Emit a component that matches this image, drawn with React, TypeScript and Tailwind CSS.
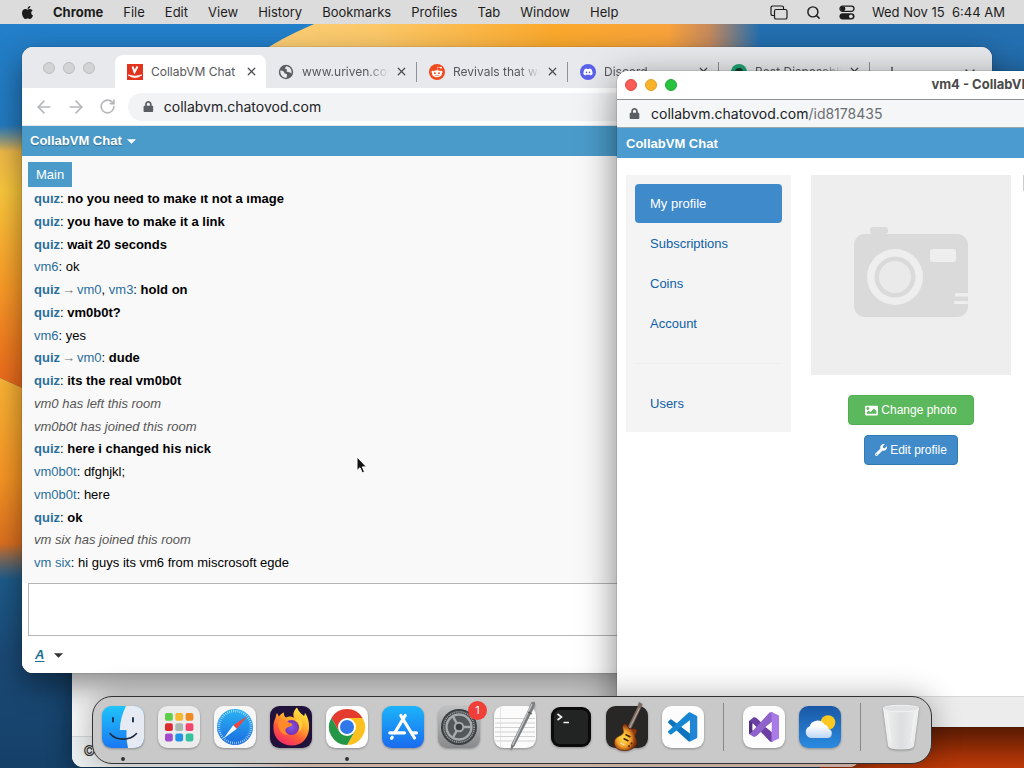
import React from 'react';
import { FaApple, FaDiscord, FaRedditAlien, FaWrench, FaLock, FaImage } from 'react-icons/fa';
import { ArrowLeft, ArrowRight, ChevronDown, Plus, RotateCw, Search, X } from 'lucide-react';
import clsx from 'clsx';

interface Message {
  from?: string;
  to?: string[];
  text: string;
  own?: boolean;
}

const MENUS = ['File', 'Edit', 'View', 'History', 'Bookmarks', 'Profiles', 'Tab', 'Window', 'Help'];

const MESSAGES: Message[] = [
  { from: 'quiz', text: 'no you need to make it not a image', own: true },
  { from: 'quiz', text: 'you have to make it a link', own: true },
  { from: 'quiz', text: 'wait 20 seconds', own: true },
  { from: 'vm6', text: 'ok' },
  { from: 'quiz', to: ['vm0', 'vm3'], text: 'hold on', own: true },
  { from: 'quiz', text: 'vm0b0t?', own: true },
  { from: 'vm6', text: 'yes' },
  { from: 'quiz', to: ['vm0'], text: 'dude', own: true },
  { from: 'quiz', text: 'its the real vm0b0t', own: true },
  { text: 'vm0 has left this room' },
  { text: 'vm0b0t has joined this room' },
  { from: 'quiz', text: 'here i changed his nick', own: true },
  { from: 'vm0b0t', text: 'dfghjkl;' },
  { from: 'vm0b0t', text: 'here' },
  { from: 'quiz', text: 'ok', own: true },
  { text: 'vm six has joined this room' },
  { from: 'vm six', text: 'hi guys its vm6 from miscrosoft egde' },
];

const Wallpaper = () => (
  <svg className="absolute inset-0 h-full w-full" viewBox="0 0 1024 768" preserveAspectRatio="none" aria-hidden="true">
    <defs>
      <linearGradient id="sky" x1="0" y1="0" x2="0" y2="1">
        <stop offset="0" stopColor="#2380cc" />
        <stop offset="0.7" stopColor="#1f6595" />
        <stop offset="0.85" stopColor="#1a4a77" />
        <stop offset="1" stopColor="#154068" />
      </linearGradient>
      <linearGradient id="petalTop" x1="0" y1="0" x2="1" y2="0">
        <stop offset="0" stopColor="#fccf78" />
        <stop offset="0.25" stopColor="#fcc868" />
        <stop offset="0.6" stopColor="#fba92c" />
        <stop offset="0.82" stopColor="#f9a33c" />
        <stop offset="0.9" stopColor="#c88a5c" />
        <stop offset="1" stopColor="#246fb0" />
      </linearGradient>
      <linearGradient id="petalLeft" gradientUnits="userSpaceOnUse" x1="0" y1="125" x2="0" y2="392">
        <stop offset="0" stopColor="#c9a25c" stopOpacity="0" />
        <stop offset="0.1" stopColor="#efb948" />
        <stop offset="0.25" stopColor="#fbc83c" />
        <stop offset="0.6" stopColor="#fb9c28" />
        <stop offset="1" stopColor="#ea651a" />
      </linearGradient>
      <linearGradient id="petalLow" gradientUnits="userSpaceOnUse" x1="0" y1="378" x2="0" y2="580">
        <stop offset="0" stopColor="#fbb535" />
        <stop offset="0.5" stopColor="#f79524" />
        <stop offset="0.82" stopColor="#dd701f" />
        <stop offset="1" stopColor="#a06a4a" stopOpacity="0" />
      </linearGradient>
      <linearGradient id="ember" x1="0" y1="0.7" x2="0" y2="1">
        <stop offset="0" stopColor="#7d2605" />
        <stop offset="1" stopColor="#c03a08" />
      </linearGradient>
    </defs>
    <rect width="1024" height="768" fill="url(#sky)" />
    <path d="M750 0H1024V200H750Z" fill="#246fb0" />
    <path d="M760 0V60H248C290 32 320 20 380 0Z" fill="url(#petalTop)" />
    <path d="M0 125H60V405L0 378Z" fill="url(#petalLeft)" />
    <path d="M0 378L60 405V580H0Z" fill="url(#petalLow)" />
    <rect x="820" y="600" width="204" height="168" fill="url(#ember)" />
  </svg>
);

const Caret = ({ className }: { className?: string }) => (
  <svg viewBox="0 0 10 5" className={clsx('h-[5px] w-[9px]', className)} aria-hidden="true">
    <path d="M0 0h10L5 5z" fill="currentColor" />
  </svg>
);

/* ---------- menu bar ---------- */

const MenuBar = () => (
  <header className="relative flex h-6 items-center bg-[#dcdcdc] pl-5 pr-[19px] text-[13px] leading-6 text-[#1c1c1c]">
    <FaApple className="mr-[18px] size-[15px]" />
    <nav className="flex items-center gap-5">
      <button className="font-bold">Chrome</button>
      {MENUS.map((menu) => (
        <button key={menu}>{menu}</button>
      ))}
    </nav>
    <div className="ml-auto flex items-center">
      <button aria-label="Stage Manager" className="mr-[18px]">
        <svg viewBox="0 0 18 15" className="h-[15px] w-[18px]" fill="none" stroke="currentColor" strokeWidth="1.2">
          <path d="M4 10.500H2.600A1.600 1.600 0 0 1 1 8.900V2.600A1.600 1.600 0 0 1 2.600 1h9.300a1.600 1.600 0 0 1 1.600 1.600V4" />
          <rect x="4.500" y="4.500" width="12.500" height="9.500" rx="1.600" />
        </svg>
      </button>
      <button aria-label="Spotlight" className="mr-[18px]">
        <Search size={15} strokeWidth={2.3} />
      </button>
      <button aria-label="Control Center" className="mr-[17px]">
        <svg viewBox="0 0 16 15" className="h-[15px] w-4">
          <rect x="1" y="1.200" width="14" height="5.200" rx="2.600" fill="none" stroke="#1c1c1c" strokeWidth="1.300" />
          <circle cx="4" cy="3.800" r="2.400" fill="#1c1c1c" />
          <rect x="0.500" y="8.200" width="15" height="6.300" rx="3.150" fill="#1c1c1c" />
          <circle cx="11.900" cy="11.350" r="1.900" fill="#dcdcdc" />
        </svg>
      </button>
      <span className="whitespace-pre">Wed Nov 15  6:44 AM</span>
    </div>
  </header>
);

/* ---------- main browser window ---------- */

const ChatovodIcon = () => (
  <svg viewBox="0 0 16 16" className="size-4">
    <rect width="16" height="16" fill="#e2331c" />
    <path d="M5.500 2.500L7.500 8L10.500 2.500" fill="none" stroke="#fff" strokeWidth="2" />
    <path d="M1.200 11Q8 16 14.800 11Q8 13.500 1.200 11Z" fill="#fff" stroke="#fff" strokeWidth="0.800" />
  </svg>
);

const GlobeIcon = () => (
  <svg viewBox="0 0 16 16" className="size-4">
    <circle cx="8" cy="8" r="7.200" fill="#5b5f64" />
    <path d="M2.300 6.500C5 6.500 6 7.500 6.500 9C7 10.500 9.500 9 9 11.500L8.500 13.800C5 14 2 11 2.300 6.500Z" fill="#e8eaed" />
    <path d="M8 2.300L7 4.500L9 5.500L8.500 7.500L12 8.500L13.600 9.500C14 5.500 12 2.600 8 2.300Z" fill="#e8eaed" />
  </svg>
);

const RoundIcon = ({ className, children }: { className: string; children?: React.ReactNode }) => (
  <span className={clsx('flex size-4 items-center justify-center rounded-full text-white', className)}>{children}</span>
);

interface TabProps {
  icon: React.ReactNode;
  title: string;
  active?: boolean;
}

const BrowserTab = ({ icon, title, active }: TabProps) => (
  <div
    className={clsx(
      'flex w-[151px] shrink-0 items-center',
      active ? 'h-[33px] self-end rounded-t-lg bg-white' : 'h-5 border-r border-[#8d9095]',
    )}
  >
    <button className="flex min-w-0 flex-1 items-center gap-2 pl-3 text-xs text-[#55585d]">
      <span className="shrink-0">{icon}</span>
      <span
        className={clsx(
          'flex-1 overflow-hidden text-left whitespace-nowrap',
          !active && '[mask-image:linear-gradient(to_right,black_75%,transparent)]',
        )}
      >
        {title}
      </span>
    </button>
    <button aria-label={`Close ${title}`} className="mr-2 ml-1.5 text-[#4a4d51]">
      <X size={13} strokeWidth={2.3} />
    </button>
  </div>
);

const MessageRow = ({ from, to, text, own }: Message) => {
  if (!from) {
    return <p className="text-[#555] italic">{text}</p>;
  }
  return (
    <p className="text-black">
      <a href="#user" className={clsx('text-[#2a6f9b]', own && 'font-bold')}>{from}</a>
      {to && <span className="px-0.5 text-[#777]">→</span>}
      {to?.map((nick, i) => (
        <React.Fragment key={nick}>
          {i > 0 && ', '}
          <a href="#user" className="text-[#2a6f9b]">{nick}</a>
        </React.Fragment>
      ))}
      : <span className={clsx(own && 'font-bold')}>{text}</span>
    </p>
  );
};

const ChatWindow = () => (
  <section className="absolute top-[47px] left-[22px] flex h-[626px] w-[970px] flex-col overflow-hidden rounded-[11px] bg-white shadow-[0_0_1px_rgba(0,0,0,0.7),0_12px_30px_rgba(0,0,0,0.45)]">
    <div className="flex h-[41px] shrink-0 items-center bg-[#e8e9ec] pt-2">
      <div className="mr-5 flex -translate-y-1 gap-2 pl-[21px]">
        <span className="size-3 rounded-full border border-[#bcbdc0] bg-[#d2d3d5]" />
        <span className="size-3 rounded-full border border-[#bcbdc0] bg-[#d2d3d5]" />
        <span className="size-3 rounded-full border border-[#bcbdc0] bg-[#d2d3d5]" />
      </div>
      <BrowserTab active icon={<ChatovodIcon />} title="CollabVM Chat" />
      <BrowserTab icon={<GlobeIcon />} title="www.uriven.com" />
      <BrowserTab icon={<RoundIcon className="bg-[#f04a1d]"><FaRedditAlien size={12} /></RoundIcon>} title="Revivals that work" />
      <BrowserTab icon={<RoundIcon className="bg-[#5b62ea]"><FaDiscord size={10} /></RoundIcon>} title="Discord" />
      <BrowserTab
        icon={<RoundIcon className="bg-[#1fa374]"><span className="size-2 rounded-full bg-[#123c2e]" /></RoundIcon>}
        title="Best Disposable"
      />
      <button aria-label="New tab" className="ml-3.5 text-[#4a4d51]"><Plus size={16} /></button>
      <button aria-label="Search tabs" className="mr-3.5 ml-auto text-[#4a4d51]"><ChevronDown size={16} /></button>
    </div>

    <div className="flex h-[38px] shrink-0 items-center border-b border-[#e4e6e8] pr-3 pl-3 text-[#b4b6b9]">
      <button aria-label="Back"><ArrowLeft size={20} /></button>
      <button aria-label="Forward" className="ml-3"><ArrowRight size={20} /></button>
      <button aria-label="Reload" className="ml-[13px]"><RotateCw size={17} strokeWidth={2.3} /></button>
      <label className="ml-3 flex h-7 flex-1 items-center gap-2.5 rounded-full bg-[#f2f3f5] pl-[15px]">
        <FaLock className="size-[11px] text-[#5b5e62]" />
        <input
          type="text"
          aria-label="Address"
          defaultValue="collabvm.chatovod.com"
          className="w-full bg-transparent text-sm text-[#202124] outline-none"
        />
      </label>
    </div>

    <div className="flex min-h-0 flex-1 flex-col bg-[#f9f9f9] font-['Liberation_Sans',sans-serif] text-[13px]">
      <button className="flex h-[30px] shrink-0 items-center gap-[5px] bg-[#4b9bca] pl-2 font-bold text-white [text-shadow:0_1px_1px_rgba(0,0,0,0.3)]">
        CollabVM Chat
        <Caret />
      </button>
      <div className="px-1.5 pt-1.5">
        <button className="h-[25px] bg-[#4b9bca] px-2 text-white">Main</button>
      </div>
      <div className="mt-2 min-h-0 flex-1 overflow-hidden">
        <div className="-mt-[5px] flex h-[calc(100%+5px)] flex-col justify-between pl-3 leading-[18px]">
          {MESSAGES.map((message, i) => (
            <MessageRow key={i} {...message} />
          ))}
        </div>
      </div>
      <div className="mt-[11px] bg-white pl-1.5">
        <textarea aria-label="Message" className="block h-[53px] w-full resize-none border border-[#b5b5b5] bg-white outline-none" />
        <div className="flex h-[37px] items-center gap-2.5 pl-[7px]">
          <button aria-label="Text style" className="font-bold text-[#1c7290] italic underline underline-offset-2">A</button>
          <button aria-label="Style options" className="pt-0.5 text-[#333]"><Caret className="w-2" /></button>
        </div>
      </div>
    </div>
  </section>
);

/* ---------- profile popup ---------- */

const NAV_LINK = 'flex h-[39px] items-center rounded-[4px] px-[15px]';

const CameraPlaceholder = () => (
  <svg viewBox="0 0 200 200" className="size-[200px] bg-[#eee]" role="img" aria-label="No photo">
    <rect x="59" y="52" width="18" height="7" rx="3" fill="#dadada" />
    <rect x="43" y="59" width="114" height="83" rx="11" fill="#dadada" />
    <circle cx="84" cy="102" r="28" fill="#eee" />
    <circle cx="84" cy="102" r="20.500" fill="#dadada" />
    <circle cx="84" cy="102" r="16" fill="#eaeaea" />
    <rect x="119" y="74" width="26" height="13" rx="3" fill="#eee" />
    <rect x="144" y="118" width="14" height="3.500" rx="1" fill="#eee" />
    <rect x="143" y="126" width="14" height="3" rx="1" fill="#eee" />
  </svg>
);

const ProfileWindow = () => (
  <section className="absolute top-[71px] left-[617px] flex h-[656px] w-[764px] flex-col overflow-hidden rounded-[11px] bg-white shadow-[0_0_1px_rgba(0,0,0,0.9),0_10px_36px_rgba(0,0,0,0.5)]">
    <div className="relative flex h-[29px] shrink-0 items-center justify-center border-b border-[#8e9194] bg-white">
      <div className="absolute left-2 flex gap-2">
        <span className="size-3 rounded-full border border-[#de4942] bg-[#fc5b57]" />
        <span className="size-3 rounded-full border border-[#dd9f28] bg-[#f9b32b]" />
        <span className="size-3 rounded-full border border-[#1ca835] bg-[#27c33f]" />
      </div>
      <h2 className="text-[13px] font-bold text-[#4a4a4a]">vm4 - CollabVM Chat</h2>
    </div>
    <div className="flex h-7 shrink-0 items-center border-b border-[#9aa5ac] bg-[#f4f6f7] pl-3 text-sm text-[#202124]">
      <FaLock className="mr-[11px] size-[11px] text-[#5b5e62]" />
      collabvm.chatovod.com<span className="text-[#6a6d71]">/id8178435</span>
    </div>
    <div className="flex min-h-0 flex-1 flex-col font-['Liberation_Sans',sans-serif] text-[13px]">
      <h1 className="h-[30px] bg-[#4b9bd0] pl-[9px] leading-[31px] font-bold text-white">CollabVM Chat</h1>
      <div className="flex flex-1 items-start gap-5 pt-[17px] pl-[9px]">
        <nav className="flex w-[165px] flex-col gap-px bg-[#f4f4f4] p-[9px] text-[#0f5fa8]">
          <a href="#profile" className={clsx(NAV_LINK, 'bg-[#3f8acb] text-white')}>My profile</a>
          <a href="#subscriptions" className={NAV_LINK}>Subscriptions</a>
          <a href="#coins" className={NAV_LINK}>Coins</a>
          <a href="#account" className={NAV_LINK}>Account</a>
          <hr className="my-[19px] border-[#eeeeee]" />
          <a href="#users" className={NAV_LINK}>Users</a>
        </nav>
        <div className="flex flex-col items-center gap-2.5">
          <CameraPlaceholder />
          <button className="mt-2.5 flex h-[30px] items-center gap-[3px] rounded-[4px] border border-[#52ad52] bg-[#5cb85c] px-4 text-xs text-white">
            <FaImage size={13} />
            Change photo
          </button>
          <button className="flex h-[30px] items-center gap-[3px] rounded-[4px] border border-[#3579b3] bg-[#428bca] px-2.5 text-xs text-white">
            <FaWrench size={12} />
            Edit profile
          </button>
        </div>
        <div className="-ml-2 h-4 flex-1 border-l border-[#ccc]" />
      </div>
    </div>
    <footer className="h-[31px] shrink-0 border-t border-[#d8d8d8] bg-[#ececec]" />
  </section>
);

/* ---------- dock ---------- */

const Icon = ({ children }: { children: React.ReactNode }) => (
  <svg viewBox="0 0 42 42" className="size-[42px] overflow-visible drop-shadow-[0_1px_1px_rgba(0,0,0,0.3)]">{children}</svg>
);

const Tile = ({ fill }: { fill: string }) => <rect width="42" height="42" rx="9.5" fill={fill} />;

const Finder = () => (
  <Icon>
    <defs>
      <linearGradient id="finder" x1="0" y1="0" x2="0" y2="1">
        <stop offset="0" stopColor="#1fc4fb" />
        <stop offset="1" stopColor="#1a78f2" />
      </linearGradient>
      <clipPath id="finderClip"><rect width="42" height="42" rx="9.5" /></clipPath>
    </defs>
    <g clipPath="url(#finderClip)">
      <rect width="42" height="42" fill="url(#finder)" />
      <path d="M24 0C20 8 18 16 17.800 24H24.500C24.300 30 24.700 36 26 42H42V0Z" fill="#e6eaf3" />
      <path d="M11 12V15.500M31 12V15.500" stroke="#16304d" strokeWidth="1.900" strokeLinecap="round" />
      <path d="M8 27.500C14 35 28 35 34.500 27.500" fill="none" stroke="#1c2b40" strokeWidth="1.600" strokeLinecap="round" />
    </g>
  </Icon>
);

const LAUNCHPAD = ['#5fce4b', '#f5b92d', '#ee8a24', '#dd2b2f', '#a9b7b0', '#f3466c', '#a14bcd', '#2095e8', '#35c29d'];

const Launchpad = () => (
  <Icon>
    <Tile fill="#ececec" />
    {LAUNCHPAD.map((color, i) => (
      <rect key={color} x={7 + (i % 3) * 10.3} y={7 + Math.floor(i / 3) * 10.3} width="7.800" height="7.800" rx="1.800" fill={color} />
    ))}
  </Icon>
);

const Safari = () => (
  <Icon>
    <defs>
      <linearGradient id="safari" x1="0" y1="0" x2="0" y2="1">
        <stop offset="0" stopColor="#2bb4f4" />
        <stop offset="1" stopColor="#1a6be0" />
      </linearGradient>
    </defs>
    <Tile fill="#f7f7f7" />
    <circle cx="21" cy="21" r="18" fill="url(#safari)" />
    <circle cx="21" cy="21" r="16" fill="none" stroke="#d9efff" strokeWidth="2.500" strokeDasharray="0.600 1.494" />
    <path d="M33.500 10L19.200 19.200L22.800 22.800Z" fill="#f2453b" />
    <path d="M9.500 32.500L19.200 19.200L22.800 22.800Z" fill="#f6f9fc" />
  </Icon>
);

const Firefox = () => (
  <Icon>
    <defs>
      <linearGradient id="flame" x1="0.8" y1="0" x2="0.25" y2="1">
        <stop offset="0" stopColor="#fff04a" />
        <stop offset="0.35" stopColor="#ffb42c" />
        <stop offset="0.65" stopColor="#ff5f35" />
        <stop offset="1" stopColor="#f0246e" />
      </linearGradient>
      <radialGradient id="orb">
        <stop offset="0" stopColor="#7a5bea" />
        <stop offset="1" stopColor="#7a2fb4" />
      </radialGradient>
    </defs>
    <Tile fill="#20123a" />
    <path d="M7 7L9 10.500C10.500 8.500 12 7 14 6.500C13.500 9 14.500 10.500 16 11.500C19 10 22 10.300 24 12C22.500 8 24 4 27 1.500C29 6 31 7.500 34 10C35 9 34.500 7.500 35 7C38 11 39.500 17 39 23C38 33 31.500 39.500 22 39.500C11.500 39.500 4 32.500 3.500 23C3.300 18 4 15 5.500 12C6 10 6 8.500 7 7Z" fill="url(#flame)" />
    <circle cx="21.500" cy="21.500" r="7.500" fill="url(#orb)" />
    <path d="M8 16C12 13 17 14 19.500 17C22 17 23 18 22 19.500C20 21 18 20.500 16.500 22C14 24 16 28 19 29C12 30 8 24 8 16Z" fill="#ff8a2a" />
    <path d="M25 14C29 16 31 21 28.500 26C32 24 34 18 30 13Z" fill="#ffcf3c" />
  </Icon>
);

const Chrome = () => (
  <Icon>
    <Tile fill="#fff" />
    <path d="M5.400 12A18 18 0 0 1 36.600 12H21L13.200 25.500Z" fill="#e33b2e" />
    <path d="M36.600 12A18 18 0 0 1 21 39L28.800 25.500L21 12Z" fill="#fcc11c" />
    <path d="M21 39A18 18 0 0 1 5.400 12L13.200 25.500H28.800Z" fill="#239746" />
    <circle cx="21" cy="21" r="9" fill="#fff" />
    <circle cx="21" cy="21" r="7" fill="#2f78ea" />
  </Icon>
);

const AppStore = () => (
  <Icon>
    <defs>
      <linearGradient id="store" x1="0" y1="0" x2="0" y2="1">
        <stop offset="0" stopColor="#1cb4fa" />
        <stop offset="1" stopColor="#1a6bee" />
      </linearGradient>
    </defs>
    <Tile fill="url(#store)" />
    <g stroke="#fff" strokeWidth="3.200" strokeLinecap="round">
      <path d="M18.800 9.500L32.500 32" />
      <path d="M23.200 9.500L12.800 26.800" />
      <path d="M7.800 26.800H22.500M29.500 26.800H34.500" />
      <path d="M10.200 31.300L9.500 32.300" />
    </g>
  </Icon>
);

const Settings = () => (
  <Icon>
    <defs>
      <linearGradient id="metal" x1="0" y1="0" x2="0" y2="1">
        <stop offset="0" stopColor="#bfc1c2" />
        <stop offset="1" stopColor="#87898b" />
      </linearGradient>
    </defs>
    <Tile fill="url(#metal)" />
    <circle cx="21" cy="21" r="18" fill="#3b3f41" />
    <circle cx="21" cy="21" r="15.200" fill="none" stroke="#94989a" strokeWidth="1.800" strokeDasharray="1.200 0.790" />
    <circle cx="21" cy="21" r="12.500" fill="#54585a" stroke="#a7abad" strokeWidth="2.400" />
    <circle cx="21" cy="21" r="4.300" fill="#3b3f41" stroke="#a7abad" strokeWidth="2" />
    <path d="M25.300 21H33M18.800 17.300L15 10.700M18.800 24.700L15 31.300" stroke="#a7abad" strokeWidth="2.400" />
  </Icon>
);

const TextEdit = () => (
  <Icon>
    <Tile fill="#fbfbfb" />
    <path d="M1 12.500H41M1 17H41M1 21.500H41M1 26H41M1 30.500H41M1 35H41" stroke="#c0c0c0" strokeWidth="0.700" />
    <path d="M6.500 0V42" stroke="#dcdcdc" strokeWidth="0.700" />
    <path d="M37.500 -3.500C39.500 -5 41.500 -4 41 -1.500L39 4L20.500 40L16.500 44.500L17 39L34.500 3Z" fill="#7b7e80" />
    <path d="M38 -2L18.500 39" stroke="#c8cacb" strokeWidth="1.200" />
    <path d="M34 6L38 8" stroke="#45484a" strokeWidth="1" />
  </Icon>
);

const Terminal = () => (
  <Icon>
    <rect x="1" y="1" width="40" height="40" rx="9" fill="#0b0b0b" />
    <rect x="4" y="4" width="34" height="34" rx="5.500" fill="#222323" />
    <path d="M7.500 8L11.500 11L7.500 14M13.500 16.500H19" fill="none" stroke="#f4f4f4" strokeWidth="1.600" />
  </Icon>
);

const GarageBand = () => (
  <Icon>
    <defs>
      <radialGradient id="guitar" cx="0.42" cy="0.55">
        <stop offset="0" stopColor="#ffe14a" />
        <stop offset="0.6" stopColor="#f5a32a" />
        <stop offset="1" stopColor="#8a3410" />
      </radialGradient>
    </defs>
    <Tile fill="#292726" />
    <path d="M33 -4L36.500 -2L34.500 3L25 23L21.500 21.500L31.500 1Z" fill="#7d6a60" />
    <path d="M33.500 2L23.500 22" stroke="#cfc4bd" strokeWidth="0.800" />
    <path d="M17.500 18.500C20.500 16.500 21.500 19.500 22.500 22C24.500 24 28.500 21.500 30.500 23.500C32.500 26.500 28 28.500 29.500 31.500C33 37 30 42.500 21.500 44.500C12 45.500 6.500 41 8.500 34.500C10.500 29.500 16.500 30 17.300 26.500C18 24 15 21 17.500 18.500Z" fill="url(#guitar)" stroke="#4a1a08" strokeWidth="0.600" />
    <path d="M19.500 28.500L24.500 31M17.500 32.500L22.500 35" stroke="#43200f" strokeWidth="1.500" />
    <path d="M14.500 37L18.500 39" stroke="#e9e2da" strokeWidth="1.200" />
    <circle cx="25.500" cy="37.500" r="0.900" fill="#43200f" />
    <circle cx="23" cy="40" r="0.900" fill="#43200f" />
  </Icon>
);

const VSCode = () => (
  <Icon>
    <Tile fill="#fdfdfd" />
    <g transform="translate(6 6.300) scale(1.220)">
      <path d="M.327 7.261L1.650 6.060a1 1 0 0 1 1.276-.057L22.500 20.900 18.210 23.790a1.492 1.492 0 0 1-1.704-.290L.326 8.740a1 1 0 0 1 .001-1.479z" fill="#0d74bd" />
      <path d="M.326 15.260L16.505.500a1.494 1.494 0 0 1 1.705-.290L22.500 3.100 2.926 17.997a1 1 0 0 1-1.276-.057L.327 16.739a1 1 0 0 1-.001-1.479z" fill="#1587d2" />
      <path d="M18 .130L23.150 2.587A1.500 1.500 0 0 1 24 3.939V20.060a1.500 1.500 0 0 1-.850 1.352L18 23.870Z" fill="#1f86d6" />
    </g>
  </Icon>
);

const VisualStudio = () => (
  <Icon>
    <Tile fill="#fdfdfd" />
    <path d="M6 15L11 11L13.500 12L29.500 27V36L27 35.500L9.500 17V26L6 28Z" fill="#6d3fa3" />
    <path d="M6 28V26L9.500 25L26.500 6.500L29.500 6V15L13.500 30L11 31Z" fill="#8f62cc" />
    <path d="M6 15L9.500 16.500V25.500L6 28Z" fill="#52307f" />
    <path d="M28.500 6L36 9.500V32.500L28.500 36Z" fill="#a97be6" />
    <path d="M9.500 17.500L12.700 21L9.500 24.500ZM28.500 16.500V25.500L22.500 21Z" fill="#fdfdfd" />
  </Icon>
);

const Weather = () => (
  <Icon>
    <defs>
      <linearGradient id="weather" x1="0" y1="0" x2="0" y2="1">
        <stop offset="0" stopColor="#1a58a6" />
        <stop offset="1" stopColor="#2a8be0" />
      </linearGradient>
      <linearGradient id="cloud" x1="0" y1="0" x2="0" y2="1">
        <stop offset="0.300" stopColor="#fff" />
        <stop offset="1" stopColor="#bcd6f5" />
      </linearGradient>
    </defs>
    <Tile fill="url(#weather)" />
    <circle cx="29" cy="16.500" r="7.300" fill="#fbc820" />
    <path d="M12 32A6 6 0 0 1 10.500 20.500A8.300 8.300 0 0 1 25.500 18.500A5.500 5.500 0 0 1 29.500 23A4.600 4.600 0 0 1 28 32Z" fill="url(#cloud)" />
  </Icon>
);

const Trash = () => (
  <Icon>
    <defs>
      <linearGradient id="bin" x1="0" y1="0" x2="1" y2="0">
        <stop offset="0" stopColor="#f2f3f3" />
        <stop offset="0.500" stopColor="#dcdedf" />
        <stop offset="1" stopColor="#f0f1f1" />
      </linearGradient>
    </defs>
    <path d="M3 2L8 40Q9 43.500 21 43.500T34 40L39 2Z" fill="url(#bin)" />
    <ellipse cx="21" cy="2.500" rx="18" ry="3.300" fill="#e0e2e3" stroke="#f4f4f4" strokeWidth="1" />
    <path d="M7 7L11 37M35 7L31 37" stroke="#f8f8f8" strokeWidth="1.200" opacity="0.600" />
  </Icon>
);

interface DockItemProps {
  name: string;
  children: React.ReactNode;
  running?: boolean;
  badge?: number;
}

const DockItem = ({ name, children, running, badge }: DockItemProps) => (
  <button aria-label={name} className="relative flex w-14 justify-center">
    {children}
    {badge && (
      <span className="absolute -top-[5px] right-0 flex size-[19px] items-center justify-center rounded-full bg-[#f03e38] text-[11px] text-white">
        {badge}
      </span>
    )}
    {running && <span className="absolute -bottom-[13px] size-1 rounded-full bg-[#333]" />}
  </button>
);

const DockDivider = () => (
  <div className="flex w-[25px] justify-center">
    <span className="h-12 w-px bg-[#888]" />
  </div>
);

const Dock = () => (
  <nav className="absolute bottom-1 left-1/2 flex h-[68px] -translate-x-1/2 items-center rounded-[20px] border border-[#333] bg-[#c9c9c9] px-0.5 pb-1.5 shadow-[0_0_30px_rgba(0,0,0,0.3)]">
    <DockItem name="Finder" running><Finder /></DockItem>
    <DockItem name="Launchpad"><Launchpad /></DockItem>
    <DockItem name="Safari"><Safari /></DockItem>
    <DockItem name="Firefox"><Firefox /></DockItem>
    <DockItem name="Chrome" running><Chrome /></DockItem>
    <DockItem name="App Store"><AppStore /></DockItem>
    <DockItem name="System Settings" badge={1}><Settings /></DockItem>
    <DockItem name="TextEdit"><TextEdit /></DockItem>
    <DockItem name="Terminal"><Terminal /></DockItem>
    <DockItem name="GarageBand"><GarageBand /></DockItem>
    <DockItem name="Visual Studio Code"><VSCode /></DockItem>
    <DockDivider />
    <DockItem name="Visual Studio"><VisualStudio /></DockItem>
    <DockItem name="Weather"><Weather /></DockItem>
    <DockDivider />
    <DockItem name="Trash"><Trash /></DockItem>
  </nav>
);

const App: React.FC = () => (
  <main className="relative h-screen w-full overflow-hidden bg-[#1f6aa5] font-['Inter',sans-serif]">
    <Wallpaper />
    <MenuBar />

    {/* Window left open behind the browser */}
    <section className="absolute top-[400px] left-[72px] flex h-[367px] w-[788px] flex-col overflow-hidden rounded-[11px] bg-[#f8f8f8] shadow-[0_6px_24px_rgba(0,0,0,0.4)]">
      <div className="flex-1" />
      <footer className="h-[31px] border-t border-[#d5d9db] bg-gradient-to-r from-[#edf0f0] from-20% to-[#eccabd] to-30% pl-[11px] text-sm leading-[28px] text-[#333]">
        ©
      </footer>
    </section>

    <ChatWindow />
    <ProfileWindow />
    <Dock />

    {/* Mouse pointer */}
    <svg viewBox="0 0 12 18" className="absolute top-[456px] left-[356px] h-[18px] w-3" aria-hidden="true">
      <path d="M1 1V14.500L4 11.700L6.200 16.800L8.500 15.800L6.300 10.900H10.500Z" fill="#111" stroke="#fff" strokeWidth="1" />
    </svg>
  </main>
);

export default App;
